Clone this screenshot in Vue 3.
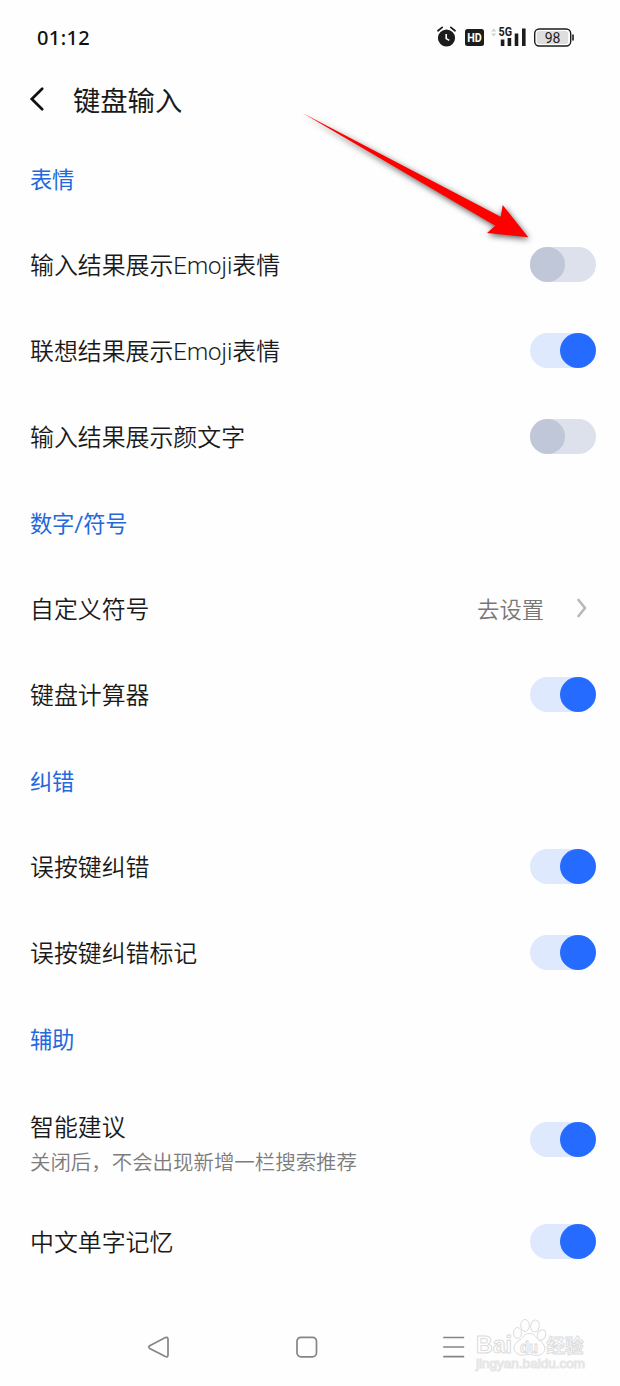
<template>
    <div class="phone">
        <div class="status">
            <span class="time">01:12</span>
            <svg class="status-icons" width="140" height="26" viewBox="0 0 140 26">
                <!-- alarm -->
                <circle cx="11.5" cy="14" r="8.6" fill="#1c1c1c" />
                <path d="M3 6.8L7.2 3.4M20 6.8L15.8 3.4" stroke="#1c1c1c" stroke-width="1.8" stroke-linecap="round" />
                <path d="M11.2 10V14.6L14.3 16.4" fill="none" stroke="#fff" stroke-width="1.6" />
                <!-- HD -->
                <rect x="30" y="5" width="19" height="17" rx="2.5" fill="#1c1c1c" />
                <text x="39.5" y="17.8" class="hd" textLength="14.5" lengthAdjust="spacingAndGlyphs">HD</text>
                <!-- mobile signal -->
                <path d="M56 7.5L58.7 4.2L61.4 7.5ZM56 9.5L58.7 12.5L61.4 9.5Z" fill="#d2d2d2" />
                <path d="M65.8 15.5h3.6v6.5h-3.6zM72.6 14h3.6v8h-3.6zM79.7 9.5h3.6v12.5h-3.6zM87 4.5h3.6v17.5h-3.6z" fill="#1c1c1c" />
                <text x="63.5" y="11.8" class="net" textLength="13.5" lengthAdjust="spacingAndGlyphs">5G</text>
                <!-- battery -->
                <rect x="99.7" y="5" width="36" height="17" rx="4.5" fill="#fff" stroke="#1c1c1c" stroke-width="1.4" />
                <rect x="101.7" y="7" width="31.5" height="13" rx="2.5" fill="#dedede" />
                <path d="M138 10.5v6" stroke="#1c1c1c" stroke-width="1.6" />
                <text x="117.5" y="18.5" class="level">98</text>
            </svg>
        </div>

        <div class="header">
            <svg width="18" height="26" viewBox="0 0 18 26">
                <path d="M13.2 2.8L2.8 13L13.2 23.2" fill="none" stroke="#111" stroke-width="2.7" stroke-linecap="round" />
            </svg>
            <span class="title">键盘输入</span>
        </div>

        <div v-for="group in groups" :key="group.title">
            <div class="row group-title">{{ group.title }}</div>
            <div v-for="item in group.items" :key="item.name" class="row" :class="{ tall: item.desc }">
                <div class="label">
                    <div class="name">{{ item.name }}</div>
                    <div v-if="item.desc" class="desc">{{ item.desc }}</div>
                </div>
                <div v-if="item.link" class="link">
                    <span>{{ item.link }}</span>
                    <svg width="12" height="22" viewBox="0 0 12 22">
                        <path d="M2.5 3L9 11L2.5 19" fill="none" stroke="#b8b8b8" stroke-width="2.6" stroke-linecap="round" />
                    </svg>
                </div>
                <div v-else class="switch" :class="{ on: item.on }" @click="item.on = !item.on">
                    <div class="knob"></div>
                </div>
            </div>
        </div>

        <div class="nav">
            <svg width="24" height="24" viewBox="0 0 24 24">
                <path d="M2.7 10.8L18.4 2.6Q21 1.6 21 4.1V20.1Q21 22.6 18.4 21.4L2.7 13.4Q0.8 12.1 2.7 10.8Z" />
            </svg>
            <svg width="24" height="24" viewBox="0 0 24 24">
                <rect x="2" y="2.3" width="19.5" height="19.5" rx="4" />
            </svg>
            <svg width="24" height="24" viewBox="0 0 24 24">
                <path d="M1.2 2.5H22.2M1.2 12H22.2M1.2 21.7H22.2" />
            </svg>
        </div>

        <svg class="arrow" width="260" height="150" viewBox="290 100 260 150">
            <path d="M302.5 113L500.7 216.7L502.7 205L528.3 237.3L487 233L495.3 225.7Z" fill="#f00" />
        </svg>

        <svg class="watermark" width="120" height="60" viewBox="0 0 120 60">
            <text x="3" y="38" class="baidu" textLength="36" lengthAdjust="spacingAndGlyphs">Bai</text>
            <path d="M45 39C38 35 41 28 47 25C51 22 51 18.5 56.5 18.5C62 18.5 62 22 66 25C72 29 74 35 69 39C64 42 60 39 56.5 39.5C52 39 49 42 45 39Z" />
            <ellipse cx="44.5" cy="18" rx="4" ry="5.5" />
            <ellipse cx="52" cy="10.5" rx="4.3" ry="6" />
            <ellipse cx="62" cy="11" rx="4.3" ry="6" transform="rotate(12 62 11)" />
            <ellipse cx="68.5" cy="20" rx="4" ry="5.5" transform="rotate(25 68.5 20)" />
            <text x="47" y="37.5" class="du" textLength="18" lengthAdjust="spacingAndGlyphs">du</text>
            <text x="73.5" y="37.5" class="jingyan" textLength="37" lengthAdjust="spacingAndGlyphs">经验</text>
            <text x="3" y="53" class="site" textLength="109" lengthAdjust="spacingAndGlyphs">jingyan.baidu.com</text>
        </svg>
    </div>
</template>

<script setup>
import {reactive} from 'vue'

const groups = reactive([
    {
        title: '表情',
        items: [
            {name: '输入结果展示Emoji表情', on: false},
            {name: '联想结果展示Emoji表情', on: true},
            {name: '输入结果展示颜文字', on: false},
        ]
    },
    {
        title: '数字/符号',
        items: [
            {name: '自定义符号', link: '去设置'},
            {name: '键盘计算器', on: true},
        ]
    },
    {
        title: '纠错',
        items: [
            {name: '误按键纠错', on: true},
            {name: '误按键纠错标记', on: true},
        ]
    },
    {
        title: '辅助',
        items: [
            {name: '智能建议', desc: '关闭后，不会出现新增一栏搜索推荐', on: true},
            {name: '中文单字记忆', on: true},
        ]
    },
])
</script>

<style>
body {
    margin: 0;
    background: #fefefe;
}
</style>

<style scoped>
.phone {
    position: relative;
    width: 620px;
    height: 1386px;
    overflow: hidden;
    background: #fefefe;
    color: #1a1a1a;
    font-family: Roboto, "Noto Sans CJK SC", sans-serif;
}

.status {
    display: flex;
    justify-content: space-between;
    align-items: center;
    box-sizing: border-box;
    height: 62px;
    padding: 13px 45px 0 37px;
}

.time {
    font-family: "Noto Sans", sans-serif;
    font-size: 20px;
    font-weight: 500;
    letter-spacing: 0.4px;
    color: #111;
}

.status-icons {
    margin-bottom: 2px;
}

.hd {
    font: 700 12.5px Roboto, sans-serif;
    fill: #fff;
    text-anchor: middle;
}

.net {
    font: 700 12px Roboto, sans-serif;
    fill: #1c1c1c;
    stroke: #fefefe;
    stroke-width: 2px;
    paint-order: stroke;
}

.level {
    font: 400 14px Roboto, sans-serif;
    fill: #1c1c1c;
    text-anchor: middle;
}

.header {
    display: flex;
    align-items: center;
    height: 73px;
    padding-left: 29px;
}

.title {
    margin-left: 26px;
    font-size: 27.3px;
}

.row {
    display: flex;
    justify-content: space-between;
    align-items: center;
    height: 86px;
    padding: 0 24px 0 30px;
}

.tall {
    height: 117px;
}

.group-title {
    font-size: 22.3px;
    letter-spacing: -0.2px;
    color: #2468dc;
}

.label {
    padding-top: 4px;
    font-weight: 350;
}

.tall .label {
    padding-top: 11px;
}

.name {
    font-size: 23.9px;
    line-height: 36px;
}

.desc {
    font-size: 20.45px;
    line-height: 34px;
    color: #7c7c7c;
}

.link {
    display: flex;
    align-items: center;
    gap: 32px;
    padding-right: 8px;
    font-size: 22.3px;
    font-weight: 350;
    color: #777;
}

.switch {
    width: 66px;
    height: 35px;
    border-radius: 18px;
    background: #dde1eb;
}

.knob {
    width: 35px;
    height: 35px;
    border-radius: 50%;
    background: #c0c7d8;
}

.switch.on {
    background: #dfe9fd;
}

.on .knob {
    width: 36px;
    margin-left: 30px;
    background: #266bff;
}

.nav {
    display: flex;
    justify-content: space-between;
    padding: 51px 154px 0 147px;
}

.nav svg {
    fill: none;
    stroke: #858585;
    stroke-width: 1.7;
}

.arrow {
    position: absolute;
    left: 290px;
    top: 100px;
    filter: drop-shadow(1px 2px 3px rgba(0, 0, 0, 0.65));
}

.watermark {
    position: absolute;
    left: 473px;
    top: 1315px;
    fill: #fefefe;
    stroke: #dcdcdc;
    stroke-width: 1;
}

.baidu {
    font: 700 23px "Liberation Sans", sans-serif;
}

.du {
    font: 700 16px "Liberation Sans", sans-serif;
}

.jingyan {
    font: 700 19px "Noto Sans CJK SC", sans-serif;
}

.site {
    font: 400 12px "Liberation Sans", sans-serif;
    stroke: #e6e6e6;
}
</style>
